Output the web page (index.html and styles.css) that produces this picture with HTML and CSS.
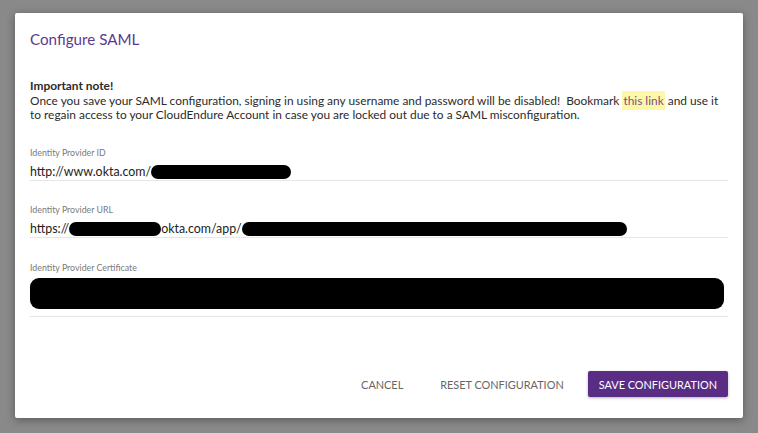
FILE: index.html
```html
<!DOCTYPE html>
<html>
<head>
  <title>Configure SAML</title>
  <link rel="stylesheet" href="styles.css">
</head>
<body>
  <div class="dialog">
    <h2 class="dialog-title">Configure SAML</h2>

    <div class="note">
      <b>Important note!</b><br>
      Once you save your SAML configuration, signing in using any username and password will be disabled!&nbsp; Bookmark <a class="note-link" href="#">this link</a> and use it
      to regain access to your CloudEndure Account in case you are locked out due to a SAML misconfiguration.
    </div>

    <div class="field field-id">
      <label>Identity Provider ID</label>
      <div class="value">http://www.okta.com/<span class="redact r-id"></span></div>
    </div>

    <div class="field field-url">
      <label>Identity Provider URL</label>
      <div class="value">https://<span class="redact r-host"></span>okta.com/app/<span class="redact r-app"></span></div>
    </div>

    <div class="field field-cert">
      <label>Identity Provider Certificate</label>
      <div class="value"><span class="redact r-cert"></span></div>
    </div>

    <div class="actions">
      <button class="btn btn-flat">CANCEL</button>
      <button class="btn btn-flat">RESET CONFIGURATION</button>
      <button class="btn btn-primary">SAVE CONFIGURATION</button>
    </div>
  </div>
</body>
</html>
```

FILE: styles.css
```css
body {
  margin: 0;
  padding: 13px 0 0 15px;
  height: 433px;
  box-sizing: border-box;
  background-color: #898989;
  font-family: Lato, "Liberation Sans", sans-serif;
  color: #2b2b2b;
  overflow: hidden;
}

.dialog {
  width: 728px;
  height: 405px;
  box-sizing: border-box;
  background-color: #fff;
  border-radius: 2px;
  box-shadow: 0 2px 8px rgba(0, 0, 0, 0.35);
  padding: 17px 15px 0 15px;
  display: flex;
  flex-direction: column;
}

.dialog-title {
  margin: 0;
  font-size: 15.2px;
  font-weight: 400;
  line-height: 18px;
  color: #5c3a8e;
}

.note {
  margin-top: 31px;
  padding-right: 2px;
  font-size: 11.9px;
  line-height: 14.6px;
}

.note b {
  font-weight: 700;
}

.note-link {
  color: #7d4f86;
  text-decoration: none;
  background-color: #fdf8a8;
  padding: 2px 1px;
}

.field {
  border-bottom: 1px solid #e6e6e6;
  padding-bottom: 1px;
}

.field label {
  display: block;
  font-size: 8.8px;
  line-height: 11px;
  color: #7a7a7a;
}

.value {
  margin-top: 6px;
  font-size: 12.4px;
  line-height: 15px;
  color: #222;
  white-space: nowrap;
}

.field-id {
  margin-top: 24px;
}

.field-url {
  margin-top: 23px;
}

.field-cert {
  margin-top: 24px;
}

.field-cert .value {
  margin-top: 5px;
  height: 37px;
}

.redact {
  display: inline-block;
  background-color: #000;
  border-radius: 7px;
  vertical-align: -3px;
}

.r-id {
  width: 140px;
  height: 14px;
}

.r-host {
  width: 92px;
  height: 14px;
}

.r-app {
  width: 385px;
  height: 14px;
}

.r-cert {
  width: 694px;
  height: 31px;
  border-radius: 9px;
}

.actions {
  margin-top: auto;
  margin-bottom: 21px;
  display: flex;
  justify-content: flex-end;
  align-items: center;
}

.btn {
  font-family: Lato, "Liberation Sans", sans-serif;
  font-size: 10.9px;
  border: none;
  background: none;
  cursor: pointer;
  height: 26px;
  padding: 0 11px;
  border-radius: 2px;
}

.btn-flat {
  color: #666;
  margin-left: 15px;
}

.btn-primary {
  margin-left: 13px;
  background-color: #5a2d85;
  color: #fff;
  box-shadow: 0 1px 3px rgba(0, 0, 0, 0.3);
}
```
